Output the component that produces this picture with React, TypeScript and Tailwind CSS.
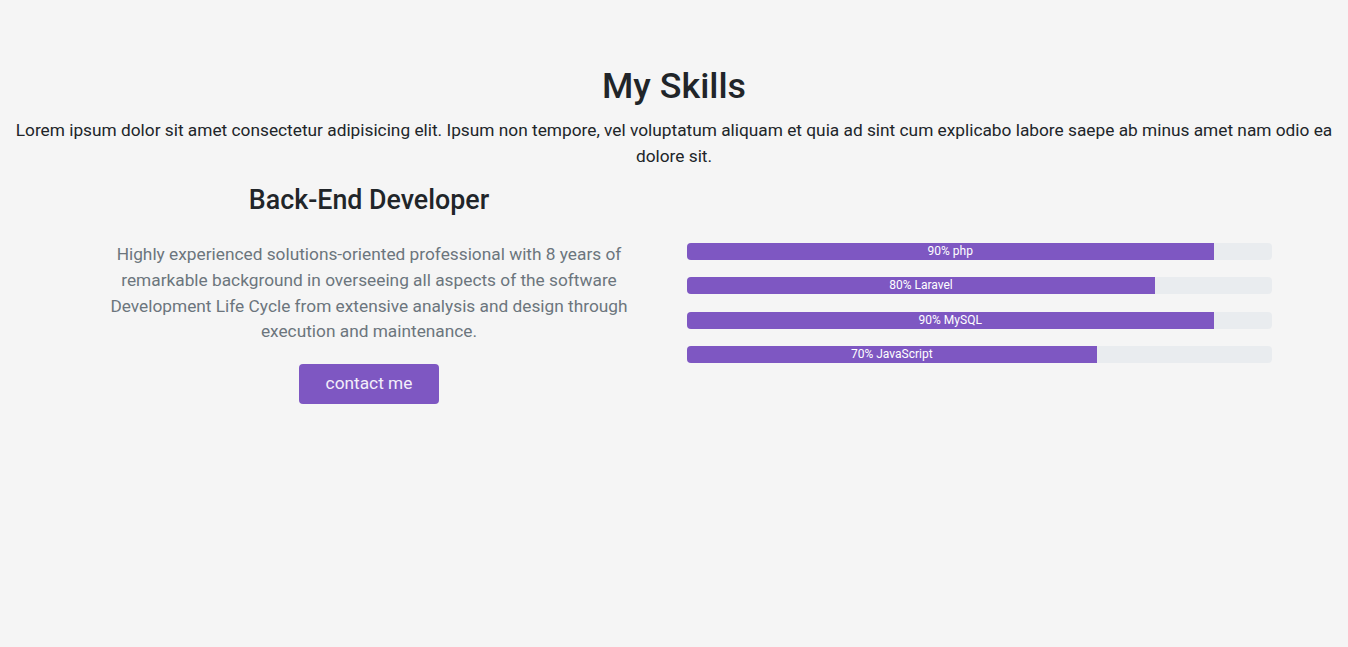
import React from "react";

const skills = [
  { label: "90% php", pct: 90 },
  { label: "80% Laravel", pct: 80 },
  { label: "90% MySQL", pct: 90 },
  { label: "70% JavaScript", pct: 70 },
];

export default function App() {
  return (
    <div
      className="min-h-[647px] w-full bg-[#f5f5f5] text-[#212529]"
      style={{ fontFamily: "Roboto, 'Noto Sans', sans-serif" }}
    >
      <div className="pt-[65px] text-center">
        <h2 className="text-[35.8px] font-medium leading-[43px] mb-[9px]">My Skills</h2>
        <p className="text-[17.3px] leading-[26px] px-[12px]">
          Lorem ipsum dolor sit amet consectetur adipisicing elit. Ipsum non tempore, vel voluptatum aliquam et quia ad sint cum explicabo labore saepe ab minus amet nam odio ea dolore sit.
        </p>
      </div>
      <div className="flex items-start mt-[15px]">
        <div className="ml-[96px] w-[546px] flex flex-col items-center text-center">
          <h3 className="text-[26.8px] font-medium leading-[32px]">Back-End Developer</h3>
          <p className="mt-[26px] text-[17.3px] leading-[25.8px] text-[#6c757d]">
            Highly experienced solutions-oriented professional with 8 years of remarkable background in overseeing all aspects of the software Development Life Cycle from extensive analysis and design through execution and maintenance.
          </p>
          <button className="mt-[19px] h-[40px] w-[140px] rounded-[4px] bg-[#7e57c2] text-[17.3px] text-[#f3eefa]">
            contact me
          </button>
        </div>
        <div className="ml-[45px] w-[585px] mt-[59px] flex flex-col gap-[17.3px]">
          {skills.map((s) => (
            <div key={s.label} className="h-[17px] rounded-[4px] bg-[#e9ecef] overflow-hidden flex">
              <div
                className="h-full bg-[#7e57c2] text-white text-[12px] leading-[17px] text-center whitespace-nowrap"
                style={{ width: `${s.pct}%` }}
              >
                {s.label}
              </div>
            </div>
          ))}
        </div>
      </div>
    </div>
  );
}
